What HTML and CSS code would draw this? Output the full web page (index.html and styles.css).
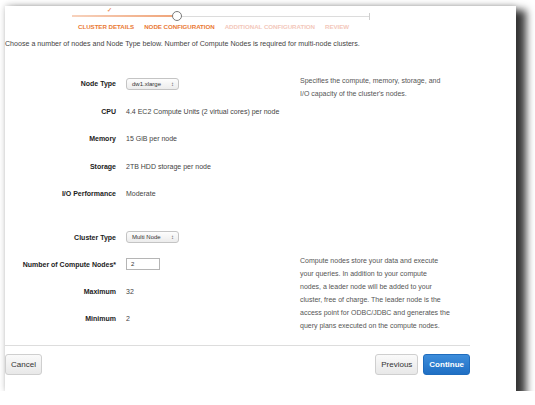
FILE: index.html
```html
<!DOCTYPE html>
<html lang="en">
<head>
<meta charset="utf-8">
<title>Node Configuration</title>
<link rel="stylesheet" href="styles.css">
</head>
<body>
<div class="stage">
  <div class="panel">
    <div class="wizard">
      <div class="track">
        <span class="track-done"></span>
        <span class="check">&#10003;</span>
        <span class="dot"></span>
        <span class="track-end"></span>
      </div>
      <ol class="steps">
        <li class="step done">Cluster Details</li>
        <li class="step current">Node Configuration</li>
        <li class="step todo">Additional Configuration</li>
        <li class="step todo">Review</li>
      </ol>
    </div>

    <p class="intro">Choose a number of nodes and Node Type below. Number of Compute Nodes is required for multi-node clusters.</p>

    <section class="group group-node">
      <div class="fields">
        <div class="row"><span class="label">Node Type</span><span class="select">dw1.xlarge<span class="arrows">&#8597;</span></span></div>
        <div class="row"><span class="label">CPU</span><span class="value">4.4 EC2 Compute Units (2 virtual cores) per node</span></div>
        <div class="row"><span class="label">Memory</span><span class="value">15 GiB per node</span></div>
        <div class="row"><span class="label">Storage</span><span class="value">2TB HDD storage per node</span></div>
        <div class="row"><span class="label">I/O Performance</span><span class="value">Moderate</span></div>
      </div>
      <p class="help help-node">Specifies the compute, memory, storage, and<br>I/O capacity of the cluster's nodes.</p>
    </section>

    <section class="group group-cluster">
      <div class="fields">
        <div class="row row-s"><span class="label">Cluster Type</span><span class="select">Multi Node<span class="arrows">&#8597;</span></span></div>
        <div class="row row-s"><span class="label">Number of Compute Nodes*</span><span class="input">2</span></div>
        <div class="row row-s"><span class="label">Maximum</span><span class="value">32</span></div>
        <div class="row row-s"><span class="label">Minimum</span><span class="value">2</span></div>
      </div>
      <p class="help help-cluster">Compute nodes store your data and execute<br>your queries. In addition to your compute<br>nodes, a leader node will be added to your<br>cluster, free of charge. The leader node is the<br>access point for ODBC/JDBC and generates the<br>query plans executed on the compute nodes.</p>
    </section>

    <div class="separator"></div>

    <div class="actions">
      <button class="btn">Cancel</button>
      <div class="nav">
        <button class="btn">Previous</button>
        <button class="btn btn-primary">Continue</button>
      </div>
    </div>
  </div>
</div>
</body>
</html>
```

FILE: styles.css
```css
* { box-sizing: border-box; }

body {
  margin: 0;
  background: #ffffff;
  font-family: "Liberation Sans", Arial, Helvetica, sans-serif;
  color: #333;
}

.stage {
  padding: 6px 0 0 5px;
}

.panel {
  width: 511px;
  height: 385px;
  background: #fff;
  box-shadow: 8px 6px 8px 2px rgba(0, 0, 0, 0.78), 0 -1px 6px rgba(0, 0, 0, 0.18);
}

/* wizard */
.wizard {
  margin-left: 67px;
  width: 298px;
  padding-top: 6px;
}

.track {
  position: relative;
  height: 8px;
}

.track::before {
  content: "";
  position: absolute;
  left: 0;
  right: 0;
  top: 4px;
  height: 1px;
  background: #dcdcdc;
}

.track-done {
  position: absolute;
  left: 0;
  top: 3px;
  width: 102px;
  height: 2px;
  background: linear-gradient(to right, #f7d2bd, #f0a57a);
}

.check {
  position: absolute;
  left: 35px;
  top: -5px;
  font-size: 6px;
  line-height: 6px;
  font-weight: bold;
  color: #ec9260;
}

.dot {
  position: absolute;
  left: 100px;
  top: -1px;
  width: 10px;
  height: 10px;
  border: 1.5px solid #7a7a7a;
  border-radius: 50%;
  background: #fff;
}

.track-end {
  position: absolute;
  right: 0;
  top: 1px;
  width: 1px;
  height: 7px;
  background: #cfcfcf;
}

.steps {
  list-style: none;
  margin: 3px 0 0 6px;
  padding: 0;
  display: flex;
  gap: 10px;
}

.step {
  font-size: 6.2px;
  line-height: 8px;
  font-weight: bold;
  text-transform: uppercase;
  letter-spacing: -0.05px;
  white-space: nowrap;
}

.step.done,
.step.current { color: #ea7a35; }
.step.todo { color: #f3c8bb; }

/* intro */
.intro {
  margin: 8px 0 0 0;
  font-size: 7.1px;
  line-height: 10px;
  color: #444;
  white-space: nowrap;
}

/* groups */
.group {
  display: flex;
}

.group-node { margin-top: 21px; }
.group-cluster { margin-top: 16px; }

.fields {
  width: 295px;
  flex: none;
}

.row {
  display: flex;
  align-items: center;
  height: 27.5px;
  gap: 10px;
}

.row-s { height: 27px; }

.label {
  width: 111px;
  flex: none;
  text-align: right;
  font-size: 7px;
  font-weight: bold;
  color: #222;
  white-space: nowrap;
}

.value {
  font-size: 7px;
  color: #444;
  white-space: nowrap;
}

.select {
  display: flex;
  align-items: center;
  justify-content: space-between;
  width: 53px;
  height: 12px;
  padding: 0 4px 0 5px;
  border: 1px solid #c4c4c4;
  border-radius: 3px;
  background: linear-gradient(#fdfdfd, #ececec);
  font-size: 6px;
  color: #333;
}

.arrows {
  font-size: 6px;
  color: #555;
}

.input {
  display: flex;
  align-items: center;
  width: 34px;
  height: 12px;
  padding-left: 4px;
  border: 1px solid #b5b5b5;
  background: #fff;
  font-size: 6px;
  color: #333;
}

.help {
  margin: 0;
  font-size: 7px;
  line-height: 13px;
  color: #555;
  white-space: nowrap;
}

.help-node {
  margin-top: 4px;
}

.help-cluster {
  margin-top: 30px;
}

/* footer */
.separator {
  margin-top: 13.5px;
  width: 465px;
  height: 1px;
  background: #dddddd;
}

.actions {
  margin-top: 8px;
  width: 465px;
  display: flex;
  justify-content: space-between;
}

.nav {
  display: flex;
  gap: 5px;
}

.btn {
  height: 21px;
  padding: 0 5px;
  border: 1px solid #cfcfcf;
  border-radius: 3px;
  background: linear-gradient(#fafafa, #e8e8e8);
  font-family: "Liberation Sans", Arial, sans-serif;
  font-size: 8px;
  color: #333;
}

.btn-primary {
  border-color: #1f6cbd;
  background: linear-gradient(#3d8ddb, #1f6fc4);
  color: #fff;
  font-weight: bold;
}
```
